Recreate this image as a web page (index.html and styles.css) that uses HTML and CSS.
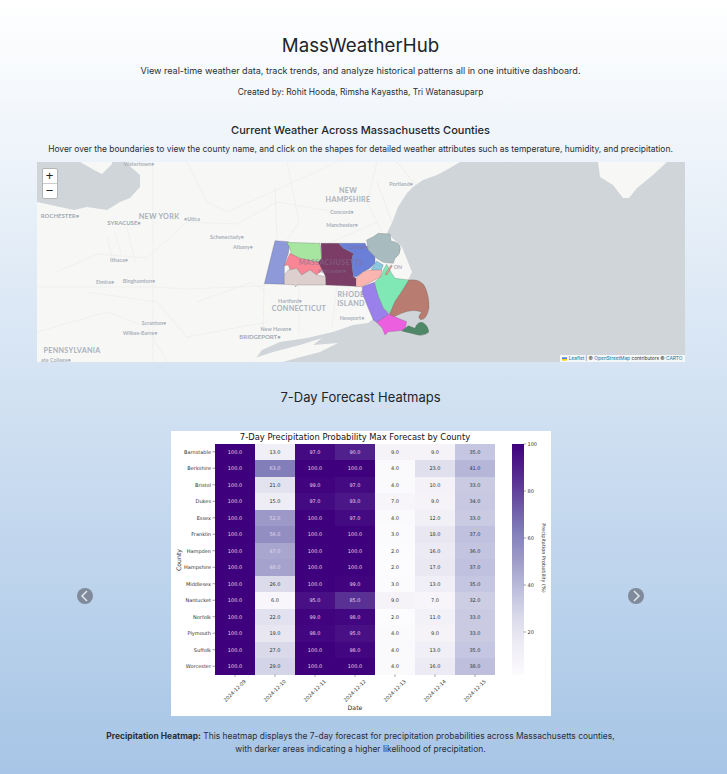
FILE: index.html
```html
<!DOCTYPE html>
<html lang="en">

<head>
    <meta charset="UTF-8">
    <meta name="viewport" content="width=device-width, initial-scale=1.0">
    <title>MassWeatherHub</title>
    <link rel="stylesheet" href="styles.css">
</head>

<body>
    <header class="intro">
        <h1>MassWeatherHub</h1>
        <p class="lead">View real-time weather data, track trends, and analyze historical patterns all in one intuitive dashboard.</p>
        <p class="credits">Created by: Rohit Hooda, Rimsha Kayastha, Tri Watanasuparp</p>
    </header>

    <section class="map-section">
        <h2>Current Weather Across Massachusetts Counties</h2>
        <p class="hint">Hover over the boundaries to view the county name, and click on the shapes for detailed weather attributes such as temperature, humidity, and precipitation.</p>
        <div class="map">
            <svg class="map-canvas" viewBox="0 0 648 200" width="648" height="200">
                <rect class="land" width="648" height="200"></rect>
                <!-- roads and borders -->
                <g class="roads">
                    <path d="M116 0V200M0 125H116L150 127 225 124"></path>
                    <path d="M20 110 60 92 110 96 150 60 200 62 240 40 300 50"></path>
                    <path d="M70 75 76 100M78 70 84 92M90 65 98 100M50 130 120 140 150 175 230 160"></path>
                    <path d="M150 0 170 40 190 50 235 30 300 0M250 0 262 60 250 78M340 0 330 40 345 70"></path>
                    <path d="M0 170 70 150 110 165 130 200M160 140 215 120 228 130"></path>
                    <path d="M240 122 262 100 290 82 340 60M262 122V170M300 124 295 165"></path>
                </g>
                <g class="state-lines">
                    <path d="M238 26 240 78M227 122 226 170M360 0 380 25M340 20 355 60"></path>
                </g>
                <path class="water" d="M0 0H43L57 8 65 12 75 2V0H88L103 13V25L93 36 83 40 70 48 50 45 37 48 0 40Z"></path>
                <path class="water" d="M423 0H648V200H216L225 188 243 180 270 176 296 170 316 163 331 161 345 150 365 130 375 110 365 85 350 71 355 61 361 45 370 31 376 25 386 18 400 13 413 6Z"></path>
                <path class="land" d="M561 0H630L616 13 600 26 592 36 586 36 576 23 563 15Z"></path>
                <path class="land" d="M218 196 236 190 263 183 285 176 276 183 301 181 283 190 260 196 246 200H216Z"></path>

                <g class="place-labels">
                    <text x="102" y="4">Watertown•</text>
                    <text class="big" x="23" y="56">ROCHESTER•</text>
                    <text class="state" x="122" y="57">NEW YORK</text>
                    <text class="big" x="87" y="63">SYRACUSE•</text>
                    <text x="155" y="59">•Utica</text>
                    <text x="190" y="77">Schenectady•</text>
                    <text x="206" y="87">Albany•</text>
                    <text x="82" y="100">Ithaca•</text>
                    <text x="68" y="122">Elmira•</text>
                    <text x="102" y="121">Binghamton•</text>
                    <text x="117" y="163">Scranton•</text>
                    <text x="103" y="173">Wilkes-Barre•</text>
                    <text class="state" x="35" y="191">PENNSYLVANIA</text>
                    <text x="19" y="200">ate College•</text>
                    <text x="239" y="169">New Haven•</text>
                    <text class="big" x="223" y="177">BRIDGEPORT•</text>
                    <text class="state" x="262" y="149">CONNECTICUT</text>
                    <text x="253" y="141">Hartford•</text>
                    <text class="state" x="311" y="31">NEW</text>
                    <text class="state" x="311" y="40">HAMPSHIRE</text>
                    <text x="305" y="52">Concord•</text>
                    <text x="305" y="65">Manchester•</text>
                    <text x="364" y="24">Portland•</text>
                    <text class="state" x="314" y="135">RHODE</text>
                    <text class="state" x="314" y="144">ISLAND</text>
                    <text x="315" y="158">Newport•</text>
                </g>

                <g class="counties" transform="translate(218 63) scale(.3333)">
                    <path fill="#8d99d8" d="M60 47 100 50 103 65 100 85 88 122V178L28 176Z"></path>
                    <path fill="#a6e6a0" d="M95 52 195 55 200 100 190 112 160 105 135 100 110 88 103 65Z"></path>
                    <path fill="#fa8595" d="M105 85 110 88 135 100 160 105 190 112 208 130 185 150 165 135 140 150 125 130 105 135 100 120 88 122Z"></path>
                    <path fill="#dccfcd" d="M88 178V150L100 135 125 130 140 150 165 135 185 150 212 155 213 180H125L122 186 118 180Z"></path>
                    <path fill="#7b3d66" d="M198 55H250L265 70 295 85 290 105 295 155 303 160V184L213 180 212 155 190 112 200 100Z"></path>
                    <path fill="#6a80d8" d="M250 55H330L340 75 360 95V115L345 130 325 140 305 155H295L290 105 295 85 265 70Z"></path>
                    <path fill="#a8bcc0" d="M335 45 355 35 370 25 405 27 408 48Q435 52 436 70T420 100L415 115 385 112 365 100 360 95 340 75Z"></path>
                    <path fill="#8cc8dd" d="M350 130 365 108 385 120 375 145 350 135Z"></path>
                    <path fill="#fbb5b0" d="M303 160 325 140 345 135 380 135 378 155 350 170 320 185H303Z"></path>
                    <path fill="#80e8b5" d="M360 170 378 155 385 135 395 118 410 145 420 160 462 165 440 200 420 230 405 265 385 250 370 215 358 185Z"></path>
                    <path fill="#e79a90" d="M390 148 408 120 412 122 396 150Z"></path>
                    <path fill="#9a80ea" d="M322 185 358 172 370 215 385 250 402 268 365 292 355 285 340 250 322 205Z"></path>
                    <path fill="#b87c70" d="M462 165Q500 160 512 190T522 250Q515 285 497 284 485 278 500 262 475 250 440 265T405 282V265L420 230 440 200Z"></path>
                    <path fill="#ec60e0" d="M365 292 402 268 430 280 455 290 450 315 425 318 400 320 390 330 382 310Z"></path>
                    <path fill="#4f8868" d="M440 318 460 302 480 310Q488 288 505 293 522 305 521 322 505 336 480 328Z"></path>
                </g>
                <g class="place-labels over">
                    <text class="state" x="294" y="103">MASSACHUSETTS</text>
                    <text x="295" y="111">Worcester•</text>
                    <text x="322" y="87">Lowell•</text>
                    <text x="361" y="107">ON</text>
                </g>
            </svg>

            <div class="zoom-control">
                <span class="zoom-btn">+</span>
                <span class="zoom-btn">−</span>
            </div>

            <div class="attribution">
                <svg class="flag" viewBox="0 0 12 8" width="5" height="4">
                    <rect width="12" height="4" fill="#4c7be1"></rect>
                    <rect y="4" width="12" height="4" fill="#ffd500"></rect>
                </svg>
                <span class="link">Leaflet</span> | © <span class="link">OpenStreetMap</span> contributors © <span class="link">CARTO</span>
            </div>
        </div>
    </section>

    <section class="forecast">
        <h2 class="forecast-title">7-Day Forecast Heatmaps</h2>
        <div class="carousel">
            <figure class="chart">
                <svg id="heatmap" viewBox="0 0 380 285" width="380" height="285"></svg>
            </figure>
            <p class="caption"><strong>Precipitation Heatmap:</strong> This heatmap displays the 7-day forecast for precipitation probabilities across Massachusetts counties, with darker areas indicating a higher likelihood of precipitation.</p>
            <button class="arrow arrow-prev">
                <svg viewBox="0 0 16 16" width="16" height="16"><path d="M10 3 5 8l5 5"></path></svg>
            </button>
            <button class="arrow arrow-next">
                <svg viewBox="0 0 16 16" width="16" height="16"><path d="M6 3l5 5-5 5"></path></svg>
            </button>
        </div>
    </section>

    <script src="heatmap.js"></script>
</body>

</html>
```

FILE: styles.css
```css
* {
    padding: 0;
    margin: 0;
    box-sizing: border-box;
}

body {
    min-height: 100vh;
    padding-right: 6px;
    font-family: Inter, "Liberation Sans", sans-serif;
    color: #2b2f33;
    background: linear-gradient(180deg, #ffffff 0%, #a7c5e6 100%);
    text-align: center;
}

.intro {
    padding-top: 34px;
}

h1 {
    font-size: 18.7px;
    line-height: 24px;
    font-weight: 400;
    color: #212529;
}

.lead {
    margin-top: 6px;
    font-size: 9.05px;
    line-height: 14px;
}

.credits {
    margin-top: 8px;
    font-size: 8.45px;
    line-height: 12px;
}

.map-section {
    margin-top: 25px;
}

h2 {
    font-size: 11px;
    line-height: 14px;
    font-weight: 500;
    color: #212529;
}

.hint {
    margin-top: 6px;
    font-size: 8.45px;
    line-height: 13px;
}

.map {
    position: relative;
    width: 648px;
    height: 200px;
    margin: 6px auto 0;
    overflow: hidden;
}

.map-canvas {
    display: block;
}

.land {
    fill: #f7f7f6;
}

.water {
    fill: #cfd5d8;
}

.roads path {
    fill: none;
    stroke: #ececeb;
    stroke-width: .7;
}

.state-lines path {
    fill: none;
    stroke: #ead9d9;
    stroke-width: .7;
    stroke-dasharray: 1 1;
}

.place-labels text {
    font-family: Lato, sans-serif;
    font-size: 5.4px;
    font-weight: 700;
    fill: #a9b1ba;
    text-anchor: middle;
}

.place-labels .big {
    font-size: 6px;
    fill: #a3abb4;
}

.place-labels .state {
    font-size: 7.2px;
    fill: #a9b1ba;
    letter-spacing: .3px;
}

.place-labels.over text {
    fill: rgba(130, 110, 140, .6);
}

.counties path {
    stroke: rgba(90, 90, 90, .5);
    stroke-width: 1.5;
    stroke-linejoin: round;
}

.zoom-control {
    position: absolute;
    top: 6px;
    left: 5px;
    width: 16px;
    border-radius: 2px;
    border: 1px solid #b5b5b5;
    background: #fff;
}

.zoom-btn {
    display: block;
    height: 14.5px;
    font-family: "Liberation Sans", sans-serif;
    font-size: 13px;
    line-height: 14px;
    color: #222;
}

.zoom-btn:first-child {
    border-bottom: 1px solid #ccc;
}

.attribution {
    position: absolute;
    right: 0;
    bottom: 0;
    height: 7px;
    padding: 0 2px;
    font-size: 4.8px;
    line-height: 7px;
    white-space: nowrap;
    background: rgba(255, 255, 255, .8);
    color: #333;
}

.flag {
    vertical-align: -0.5px;
}

.link {
    color: #0078a8;
}

.forecast {
    margin-top: 27px;
}

.forecast-title {
    font-size: 13px;
    line-height: 17px;
    font-weight: 400;
}

.carousel {
    position: relative;
    margin-top: 25px;
    padding-bottom: 5px;
}

.arrow {
    position: absolute;
    top: 50%;
    width: 16px;
    height: 16px;
    margin-top: -8px;
    border: 0;
    border-radius: 50%;
    background: #7f8b9b;
    display: flex;
}

.arrow-prev {
    left: 77px;
}

.arrow-next {
    right: 77px;
}

.arrow path {
    fill: none;
    stroke: #e8edf3;
    stroke-width: 1.4;
}

.chart {
    width: 380px;
    height: 285px;
    margin: 0 auto;
    background: #fff;
}

#heatmap {
    display: block;
    font-family: "DejaVu Sans", sans-serif;
}

#heatmap rect {
    shape-rendering: crispEdges;
}

#heatmap text {
    font-size: 5px;
    fill: #333;
}

#heatmap .chart-title {
    font-size: 8.4px;
    fill: #111;
    text-anchor: middle;
}

#heatmap .axis-name {
    font-size: 6.2px;
    text-anchor: middle;
}

#heatmap .county-name {
    text-anchor: end;
}

#heatmap .date-name,
#heatmap .value {
    text-anchor: middle;
}

#heatmap .value.light {
    fill: #e0dbea;
}

#heatmap .tick {
    stroke: #444;
    stroke-width: .5;
}

.caption {
    width: 520px;
    margin: 14px auto 0;
    font-size: 8.45px;
    line-height: 13px;
}

.caption strong {
    font-weight: 700;
}
```

FILE: heatmap.js
```js
const dates = ["2024-12-09", "2024-12-10", "2024-12-11", "2024-12-12", "2024-12-13", "2024-12-14", "2024-12-15"];

const rows = [
    ["Barnstable", 100, 13, 97, 90, 9, 9, 35],
    ["Berkshire", 100, 63, 100, 100, 4, 23, 41],
    ["Bristol", 100, 21, 99, 97, 4, 10, 33],
    ["Dukes", 100, 15, 97, 93, 7, 9, 34],
    ["Essex", 100, 52, 100, 97, 4, 12, 33],
    ["Franklin", 100, 56, 100, 100, 3, 18, 37],
    ["Hampden", 100, 47, 100, 100, 2, 16, 36],
    ["Hampshire", 100, 48, 100, 100, 2, 17, 37],
    ["Middlesex", 100, 26, 100, 99, 3, 13, 35],
    ["Nantucket", 100, 6, 95, 85, 9, 7, 32],
    ["Norfolk", 100, 22, 99, 98, 2, 11, 33],
    ["Plymouth", 100, 19, 98, 95, 4, 9, 33],
    ["Suffolk", 100, 27, 100, 98, 4, 13, 35],
    ["Worcester", 100, 29, 100, 100, 4, 16, 38]
];

// matplotlib "Purples"
const purples = ["#fcfbfd", "#efedf5", "#dadaeb", "#bcbddc", "#9e9ac8", "#807dba", "#6a51a3", "#54278f", "#3f007d"];

const left = 44, top_ = 12.5, cellW = 40, cellH = 16.5;

function hexToRgb(hex) {
    return [1, 3, 5].map((i) => parseInt(hex.slice(i, i + 2), 16));
}

function colorFor(value) {
    const t = (value - 2) / 98 * (purples.length - 1);
    const i = Math.min(Math.floor(t), purples.length - 2);
    const a = hexToRgb(purples[i]);
    const b = hexToRgb(purples[i + 1]);
    const mix = a.map((c, k) => Math.round(c + (b[k] - c) * (t - i)));
    return `rgb(${mix.join(",")})`;
}

let html = `<text class="chart-title" x="184" y="9">7-Day Precipitation Probability Max Forecast by County</text>`;

rows.forEach((row, r) => {
    const y = top_ + r * cellH;
    html += `<text class="county-name" x="40" y="${y + 10}">${row[0]}</text>`;
    html += `<line class="tick" x1="41.5" x2="44" y1="${y + 8.25}" y2="${y + 8.25}"></line>`;
    row.slice(1).forEach((value, c) => {
        const x = left + c * cellW;
        html += `<rect x="${x}" y="${y}" width="${cellW}" height="${cellH + .5}" fill="${colorFor(value)}"></rect>`;
        html += `<text class="value ${value > 45 ? "light" : ""}" x="${x + 20}" y="${y + 10}">${value}.0</text>`;
    });
});

dates.forEach((date, c) => {
    const x = left + c * cellW + 20;
    html += `<line class="tick" x1="${x}" x2="${x}" y1="243.5" y2="246"></line>`;
    html += `<text class="date-name" transform="rotate(-45 ${x} 260)" x="${x}" y="261.5">${date}</text>`;
});

html += `<text class="axis-name" transform="rotate(-90 8 129)" x="8" y="131">County</text>`;
html += `<text class="axis-name" x="184" y="279">Date</text>`;

// colorbar
html += `<defs><linearGradient id="bar" x1="0" y1="1" x2="0" y2="0">`;
purples.forEach((color, i) => {
    html += `<stop offset="${i / (purples.length - 1)}" stop-color="${color}"></stop>`;
});
html += `</linearGradient></defs>`;
html += `<rect x="341" y="13" width="11.5" height="231" fill="url(#bar)"></rect>`;

[100, 80, 60, 40, 20].forEach((label, i) => {
    const y = 13 + i * 47;
    html += `<line class="tick" x1="352.5" x2="355" y1="${y}" y2="${y}"></line>`;
    html += `<text x="356.5" y="${y + 2}">${label}</text>`;
});

html += `<text class="value" transform="rotate(90 373 127)" x="373" y="129">Precipitation Probability (%)</text>`;

document.getElementById("heatmap").innerHTML = html;
```
